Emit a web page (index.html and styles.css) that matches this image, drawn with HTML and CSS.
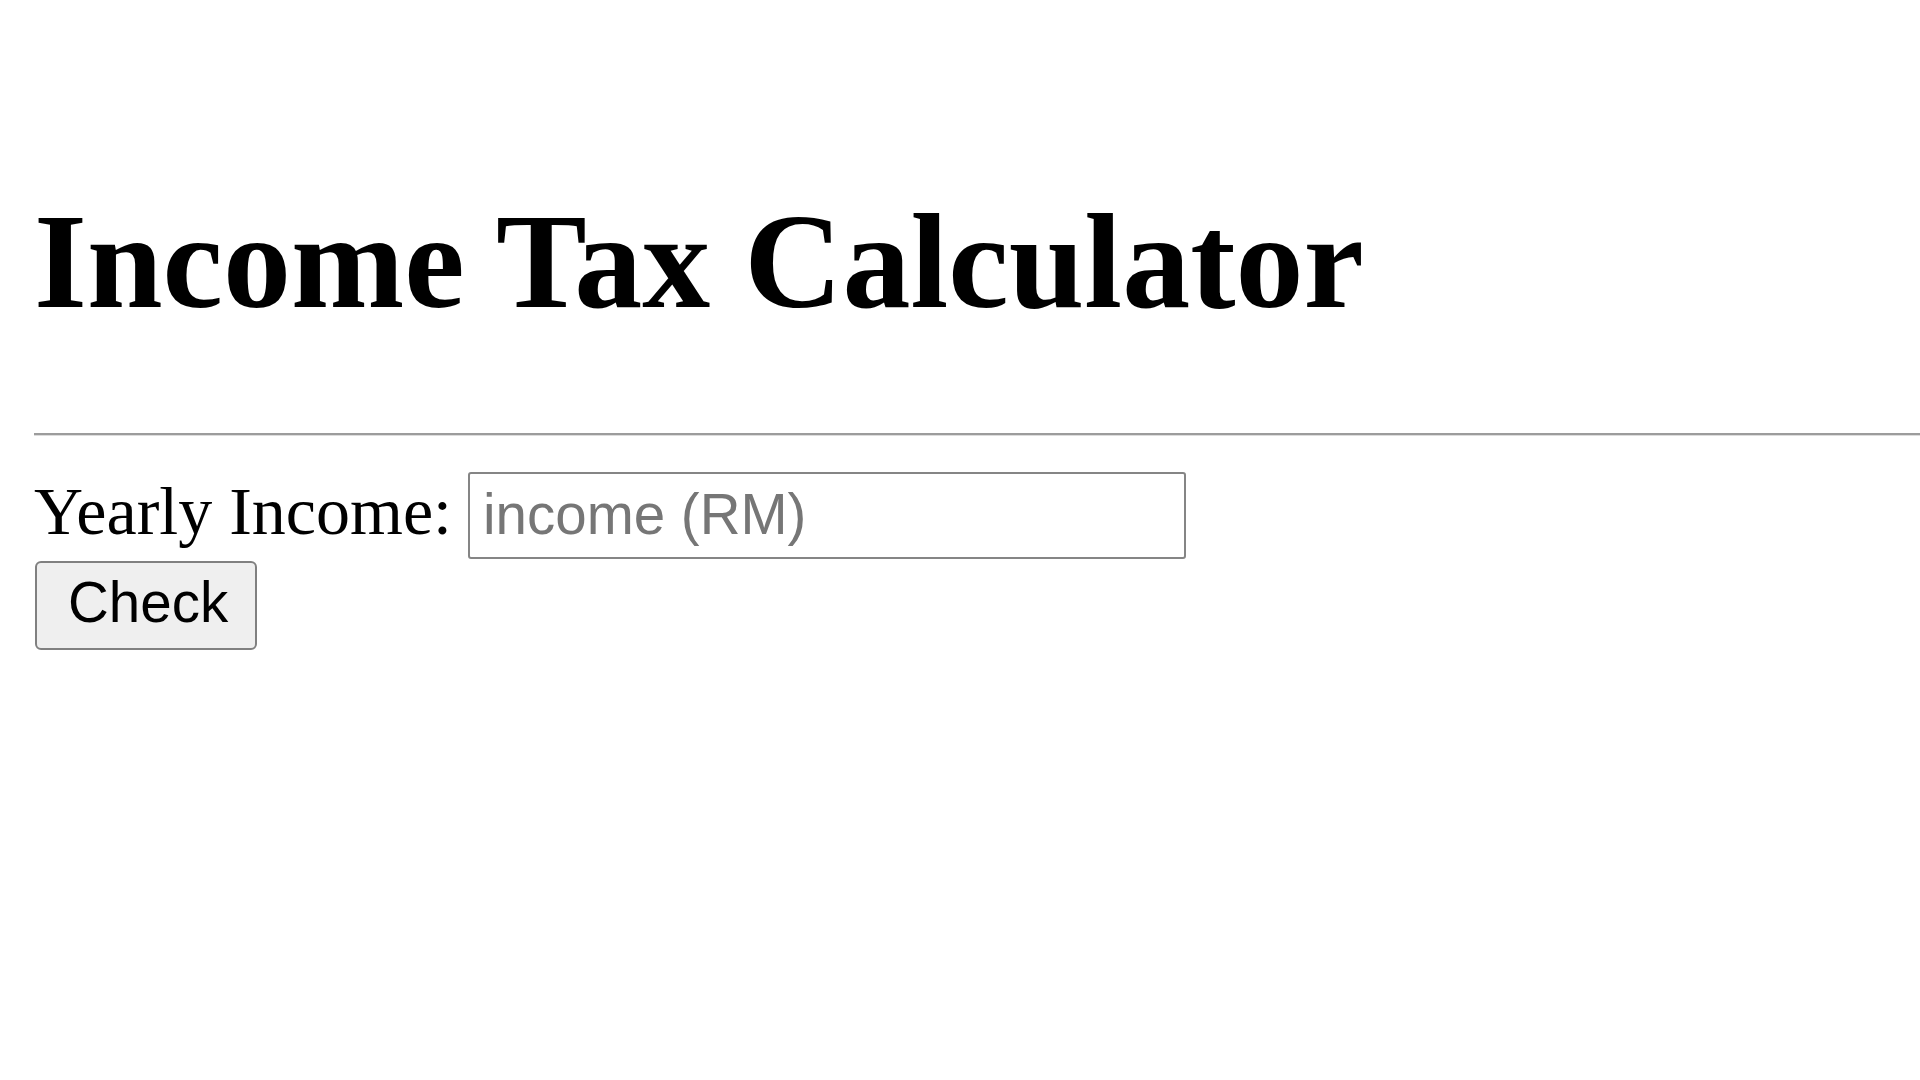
FILE: index.html
```html
<!DOCTYPE html>
<html lang="en">
<head>
<meta charset="utf-8">
<title>Income Tax Calculator</title>
<link rel="stylesheet" href="styles.css">
</head>
<body>
<main class="page">
  <h1 class="title">Income Tax Calculator</h1>
  <hr class="rule">
  <form class="calc">
    <div class="row">
      <label class="label" for="income">Yearly Income:</label>
      <input id="income" class="field" type="text" placeholder="income (RM)">
    </div>
    <button class="btn" type="button">Check</button>
  </form>
</main>
</body>
</html>
```
FILE: styles.css
```css
html, body {
  margin: 0;
  padding: 0;
  background: #ffffff;
  overflow: hidden;
}

.page {
  padding: 184px 0 0 34px;
  font-family: "Liberation Serif", "Times New Roman", serif;
  color: #000000;
}

.title {
  margin: 0 0 95px 0;
  font-size: 136px;
  line-height: 154px;
  font-weight: bold;
  white-space: nowrap;
}

.rule {
  margin: 0;
  height: 0;
  border: none;
  border-top: 2px solid #9c9c9c;
  border-bottom: 1px solid #dcdcdc;
}

.calc {
  margin: 36px 0 0 0;
}

.row {
  display: flex;
  align-items: baseline;
  gap: 16px;
}

.label {
  font-size: 68px;
  line-height: 77px;
}

.field {
  box-sizing: border-box;
  width: 718px;
  height: 87px;
  margin: 0;
  padding: 8.5px 13px 10.5px 13px;
  font-family: "Liberation Sans", Arial, sans-serif;
  font-size: 56.5px;
  line-height: 64px;
  color: #000000;
  background: #ffffff;
  border: 2px solid #858585;
  border-radius: 3px;
  outline: none;
}

.field::placeholder {
  color: #767676;
}

.btn {
  display: block;
  box-sizing: border-box;
  width: 222px;
  height: 89px;
  margin: 2px 0 0 1px;
  padding: 0 28px 6px 31px;
  font-family: "Liberation Sans", Arial, sans-serif;
  font-size: 56.5px;
  line-height: 64px;
  color: #000000;
  background: #efefef;
  border: 2px solid #808080;
  border-radius: 6px;
  text-align: left;
}
```
